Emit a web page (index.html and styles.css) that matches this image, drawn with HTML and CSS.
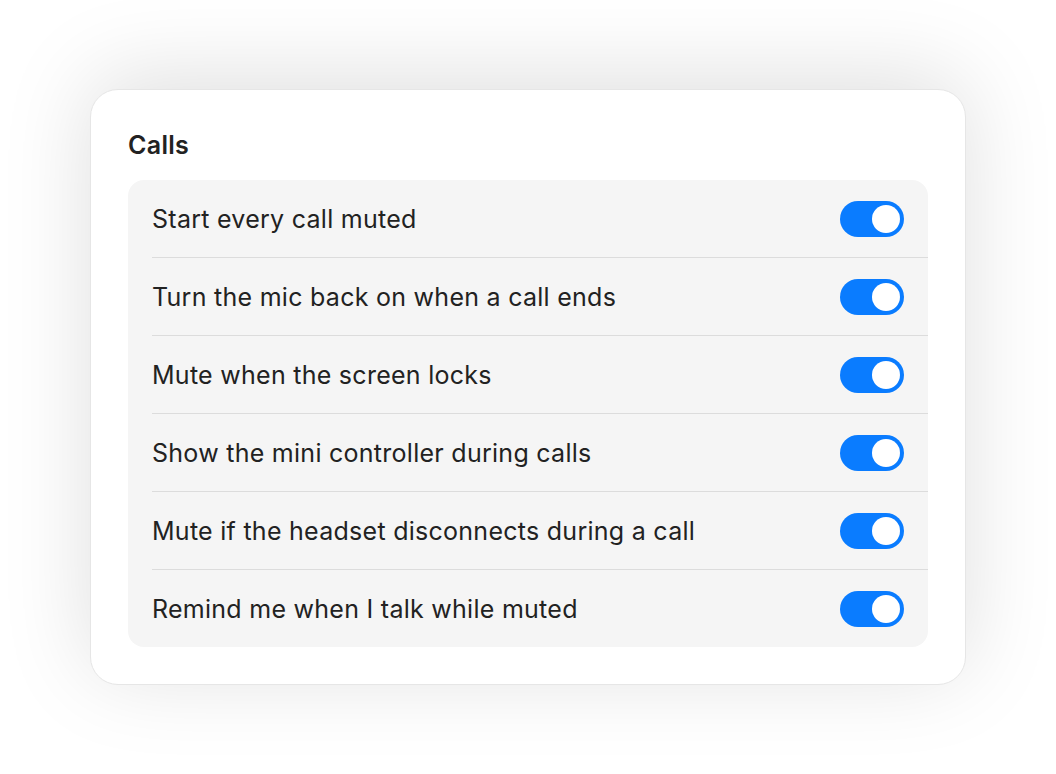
FILE: index.html
```html
<!DOCTYPE html>
<html>
<head>
<meta charset="utf-8">
<link rel="stylesheet" href="styles.css">
</head>
<body>
<div class="stage">
  <section class="card">
    <h2 class="title">Calls</h2>
    <div class="group">
      <div class="row"><span class="label">Start every call muted</span><span class="toggle on"><span class="knob"></span></span></div>
      <div class="row"><span class="label">Turn the mic back on when a call ends</span><span class="toggle on"><span class="knob"></span></span></div>
      <div class="row"><span class="label">Mute when the screen locks</span><span class="toggle on"><span class="knob"></span></span></div>
      <div class="row"><span class="label">Show the mini controller during calls</span><span class="toggle on"><span class="knob"></span></span></div>
      <div class="row"><span class="label">Mute if the headset disconnects during a call</span><span class="toggle on"><span class="knob"></span></span></div>
      <div class="row"><span class="label">Remind me when I talk while muted</span><span class="toggle on"><span class="knob"></span></span></div>
    </div>
  </section>
</div>
</body>
</html>
```

FILE: styles.css
```css
html, body {
  margin: 0;
  padding: 0;
  background: #ffffff;
}
body {
  font-family: Inter, "Noto Sans", "Liberation Sans", sans-serif;
  color: #222222;
}
.stage {
  width: 1056px;
  height: 774px;
  display: flex;
  align-items: center;
  justify-content: center;
}
.card {
  box-sizing: border-box;
  width: 876px;
  height: 596px;
  background: #ffffff;
  border: 1px solid #e6e6e6;
  border-radius: 28px;
  padding: 37px;
  box-shadow: 0 -12px 90px rgba(0, 0, 0, 0.13);
}
.title {
  margin: 0;
  font-size: 25px;
  line-height: 30px;
  font-weight: 600;
  letter-spacing: 0.3px;
  color: #222222;
  padding: 3px 0 20px;
}
.group {
  background: #f5f5f5;
  border-radius: 16px;
  overflow: hidden;
}
.row {
  position: relative;
  height: 77px;
  display: flex;
  align-items: center;
  justify-content: space-between;
  padding: 0 24px;
}
.row + .row {
  border-top: 1px solid transparent;
}
.row + .row::before {
  content: "";
  position: absolute;
  top: -1px;
  left: 24px;
  right: 0;
  height: 1px;
  background: #dcdcdc;
}
.label {
  font-size: 25px;
  line-height: 30px;
  letter-spacing: 0.27px;
  color: #222222;
}
.toggle {
  box-sizing: border-box;
  width: 64px;
  height: 36px;
  border-radius: 18px;
  background: #0a7cff;
  padding: 4px;
  display: flex;
  justify-content: flex-end;
}
.knob {
  width: 28px;
  height: 28px;
  border-radius: 50%;
  background: #ffffff;
}
```
